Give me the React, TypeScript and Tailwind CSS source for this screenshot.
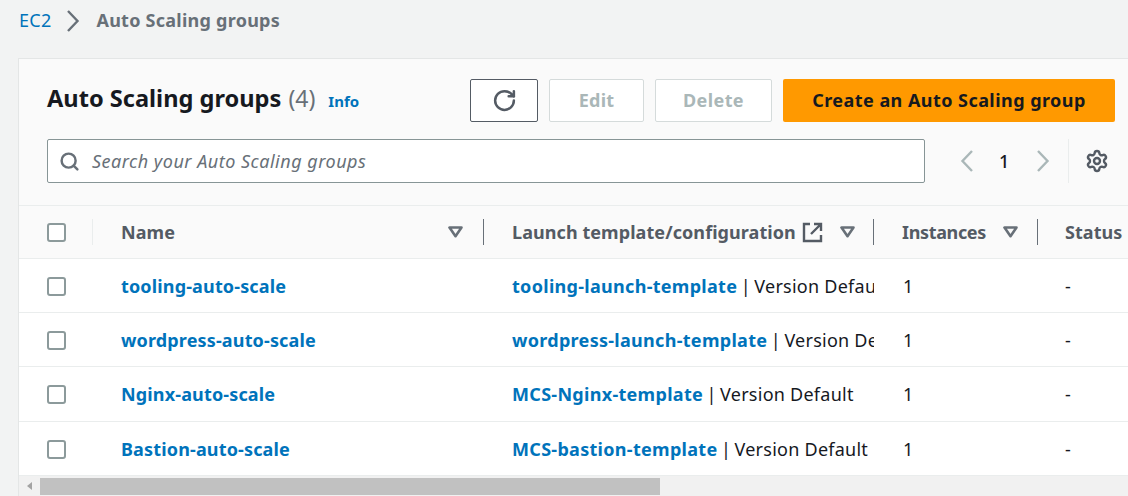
import { RotateCw, Search, Settings } from "lucide-react"

const rows = [
  { name: "tooling-auto-scale", template: "tooling-launch-template", version: "Version Default", height: "h-[54px]" },
  { name: "wordpress-auto-scale", template: "wordpress-launch-template", version: "Version Default", height: "h-[54px]" },
  { name: "Nginx-auto-scale", template: "MCS-Nginx-template", version: "Version Default", height: "h-[55px]" },
  { name: "Bastion-auto-scale", template: "MCS-bastion-template", version: "Version Default", height: "h-[54px]" },
]

const gridCols = "grid grid-cols-[74px_391px_390px_164px_1fr]"

function Checkbox() {
  return <div className="h-[19px] w-[19px] rounded-[3px] border-2 border-[#8c9a9b] bg-white" />
}

function SortCaret() {
  return (
    <svg width="15" height="12" viewBox="0 0 15 12" className="shrink-0">
      <path d="M1.5 1.5h12L7.5 10.2z" fill="none" stroke="#687078" strokeWidth="2.6" strokeLinejoin="round" />
    </svg>
  )
}

function Chevron({ left, color, className }: { left?: boolean; color: string; className?: string }) {
  return (
    <svg width="14" height="24" viewBox="0 0 14 24" className={className}>
      <path
        d={left ? "M12 2L2.5 12L12 22" : "M2 2L11.5 12L2 22"}
        fill="none"
        stroke={color}
        strokeWidth="2.4"
      />
    </svg>
  )
}

function ExternalIcon() {
  return (
    <svg width="21" height="21" viewBox="0 0 21 21" className="ml-[6px] shrink-0">
      <path d="M8 2H2v17h17v-6" fill="none" stroke="#545b64" strokeWidth="2.4" />
      <path d="M12 2h7v7M19 2L9 12" fill="none" stroke="#545b64" strokeWidth="2.4" />
    </svg>
  )
}

export default function App() {
  return (
    <div className="h-[496px] w-[1128px] overflow-hidden bg-[#f2f3f3] font-['Noto_Sans',sans-serif] text-[18px] tracking-[0.25px] text-[#16191f]">
      {/* Breadcrumb */}
      <div className="flex h-[58px] items-start pl-[19px] pt-[7px] leading-[27px]">
        <span className="text-[#0073bb]">EC2</span>
        <Chevron color="#687078" className="ml-[15px] mr-[16px] mt-[2px]" />
        <span className="font-bold text-[#687078]">Auto Scaling groups</span>
      </div>

      {/* Card */}
      <div className="ml-[18px] border-l border-t border-[#e4e6e6] bg-white">
        <div className="h-[147px] border-b border-[#eaeded] bg-[#fafafa] pl-[28px] pr-[13px]">
          <div className="flex h-[80px] items-start pt-[20px]">
            <div className="flex flex-1 items-baseline pt-px">
              <span className="text-[23.6px] font-bold leading-[36px] tracking-normal">Auto Scaling groups</span>
              <span className="ml-[7px] text-[23px] leading-[36px] tracking-normal text-[#687078]">(4)</span>
              <span className="ml-[13px] text-[15px] font-bold tracking-normal text-[#0073bb]">Info</span>
            </div>
            <button className="flex h-[43px] w-[68px] items-center justify-center rounded-[2px] border border-[#545b64] bg-white text-[#545b64]">
              <RotateCw size={25} strokeWidth={2.4} />
            </button>
            <button className="ml-[11px] h-[43px] w-[95px] rounded-[2px] border border-[#d5dbdb] bg-white font-bold text-[#aab7b8]">
              Edit
            </button>
            <button className="ml-[11px] h-[43px] w-[117px] rounded-[2px] border border-[#d5dbdb] bg-white font-bold tracking-[0.4px] text-[#aab7b8]">
              Delete
            </button>
            <button className="ml-[11px] h-[43px] w-[332px] rounded-[2px] bg-[#ff9900] font-bold tracking-[0.45px] text-[#16191f]">
              Create an Auto Scaling group
            </button>
          </div>
          <div className="flex items-center">
            <div className="flex h-[44px] w-[878px] items-center rounded-[2px] border border-[#879596] bg-white pl-[11px]">
              <Search size={21} strokeWidth={2.8} className="text-[#687078]" />
              <span className="ml-[12px] italic tracking-[0.5px] text-[#687078]">Search your Auto Scaling groups</span>
            </div>
            <Chevron left color="#aab7b8" className="ml-[35px]" />
            <span className="ml-[25px] w-[10px] text-center font-medium">1</span>
            <Chevron color="#aab7b8" className="ml-[27px]" />
            <div className="ml-[18px] flex h-[44px] items-center border-l border-[#eaeded] pl-[16px]">
              <Settings size={24} strokeWidth={2.4} className="text-[#545b64]" />
            </div>
          </div>
        </div>

        {/* Header row */}
        <div className={`${gridCols} h-[53px] items-center border-b border-[#eaeded] bg-[#fafafa] font-bold tracking-[0.07px] text-[#545b64]`}>
          <div className="flex items-center justify-between pl-[28px]">
            <Checkbox />
            <span className="h-[26px] w-px bg-[#eaeded]" />
          </div>
          <div className="flex items-center pl-[28px]">
            <span className="flex-1">Name</span>
            <SortCaret />
            <span className="ml-[20px] h-[26px] w-px bg-[#687078]" />
          </div>
          <div className="flex items-center pl-[28px]">
            <span className="whitespace-nowrap">Launch template/configuration</span>
            <ExternalIcon />
            <span className="ml-[17px]"><SortCaret /></span>
            <span className="ml-auto h-[26px] w-px bg-[#687078]" />
          </div>
          <div className="flex items-center pl-[28px]">
            <span className="flex-1 tracking-[-0.35px]">Instances</span>
            <SortCaret />
            <span className="ml-[19px] h-[26px] w-px bg-[#687078]" />
          </div>
          <div className="whitespace-nowrap pl-[27px]">Status</div>
        </div>

        {/* Rows */}
        {rows.map((row) => (
          <div key={row.name} className={`${gridCols} ${row.height} items-center border-b border-[#eaeded] bg-white pt-px`}>
            <div className="pl-[28px]">
              <Checkbox />
            </div>
            <a className="pl-[28px] font-bold tracking-[0.15px] text-[#0073bb]">{row.name}</a>
            <div className="overflow-hidden whitespace-nowrap pl-[28px]">
              <a className="font-bold tracking-[0.3px] text-[#0073bb]">{row.template}</a>
              <span className="[word-spacing:-1.5px]"> | </span>
              <span>{row.version}</span>
            </div>
            <div className="pl-[29px]">1</div>
            <div className="pl-[27px]">-</div>
          </div>
        ))}

        {/* Horizontal scrollbar */}
        <div className="flex h-[20px] items-center bg-[#f1f1f1]">
          <span className="ml-[8px] h-0 w-0 border-y-[4px] border-r-[5px] border-y-transparent border-r-[#a3a3a3]" />
          <div className="ml-[8px] h-[17px] w-[620px] bg-[#c1c1c1]" />
        </div>
      </div>
    </div>
  )
}
